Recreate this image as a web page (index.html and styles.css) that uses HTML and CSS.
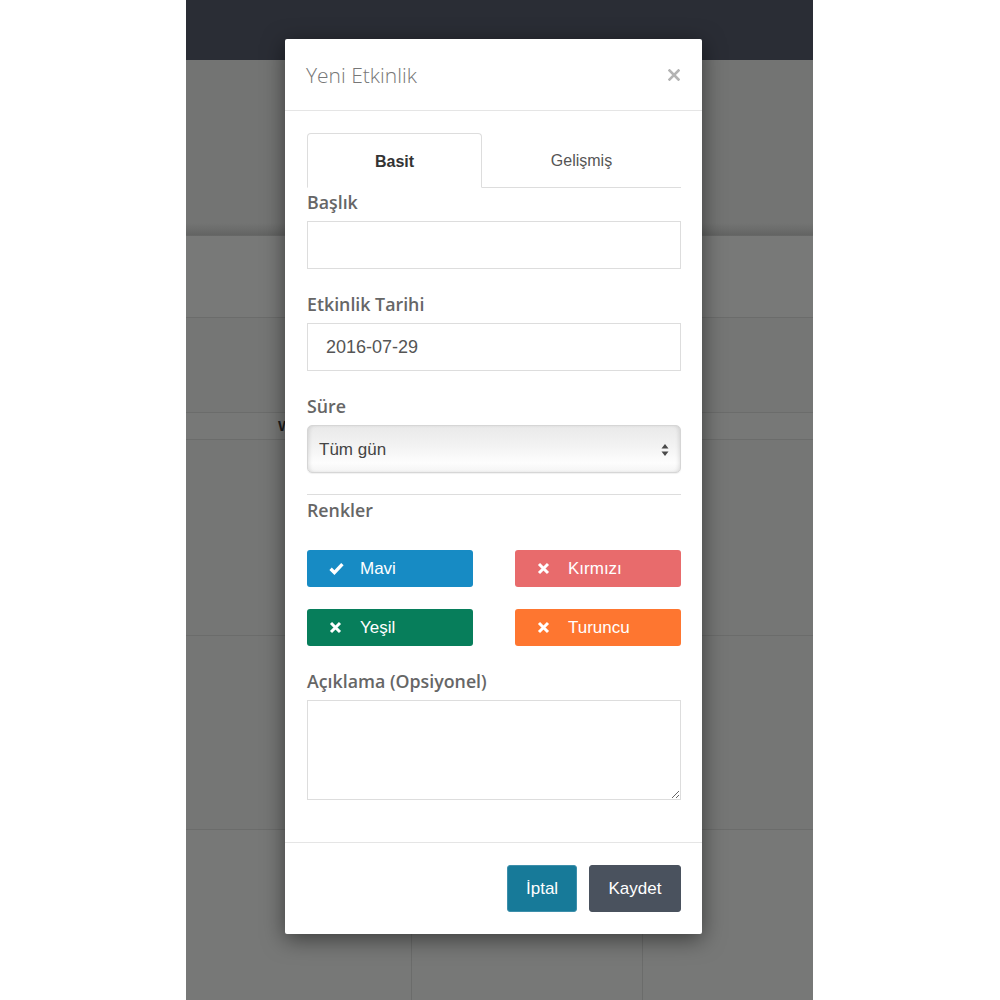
FILE: index.html
```html
<!DOCTYPE html>
<html lang="tr">
<head>
<meta charset="utf-8">
<title>Yeni Etkinlik</title>
<link rel="stylesheet" href="styles.css">
</head>
<body>
<div class="app">
  <div class="topbar"></div>
  <div class="hero"></div>
  <div class="row row-a"></div>
  <div class="row row-b"></div>
  <div class="row row-head"><span class="day">Wed</span></div>
  <div class="row row-c"></div>
  <div class="row row-d"></div>
  <div class="row row-e">
    <div class="cell"></div>
    <div class="cell"></div>
    <div class="cell"></div>
  </div>
</div>

<div class="modal">
  <div class="modal-header">
    <h4 class="modal-title">Yeni Etkinlik</h4>
    <span class="close" aria-label="Kapat">
      <svg width="12" height="12" viewBox="0 0 12 12"><path d="M1.5 1.5 L10.5 10.5 M10.5 1.5 L1.5 10.5" stroke="#b3b3b3" stroke-width="2.6" stroke-linecap="square"/></svg>
    </span>
  </div>
  <div class="modal-body">
    <div class="tabs">
      <div class="tab active">Basit</div>
      <div class="tab">Gelişmiş</div>
    </div>
    <div class="group">
      <label class="label">Başlık</label>
      <input class="input" type="text" value="">
    </div>
    <div class="group">
      <label class="label">Etkinlik Tarihi</label>
      <input class="input" type="text" value="2016-07-29">
    </div>
    <div class="group group-select">
      <label class="label">Süre</label>
      <div class="select">
        <span>Tüm gün</span>
        <svg width="8" height="14" viewBox="0 0 8 14"><path d="M4 1 L7.5 5.5 H0.5 Z M4 13 L7.5 8.5 H0.5 Z" fill="#4a4a4a"/></svg>
      </div>
    </div>
    <hr class="divider">
    <label class="label">Renkler</label>
    <div class="colors">
      <div class="color c-blue"><span class="ico"><svg width="15" height="13" viewBox="0 0 15 13"><path d="M1.6 6.8 L5.4 10.6 L13.4 2.2" stroke="#fff" stroke-width="3.4" fill="none"/></svg></span>Mavi</div>
      <div class="color c-red"><span class="ico"><svg width="13" height="13" viewBox="0 0 13 13"><path d="M2 2 L11 11 M11 2 L2 11" stroke="#fff" stroke-width="3"/></svg></span>Kırmızı</div>
      <div class="color c-green"><span class="ico"><svg width="13" height="13" viewBox="0 0 13 13"><path d="M2 2 L11 11 M11 2 L2 11" stroke="#fff" stroke-width="3"/></svg></span>Yeşil</div>
      <div class="color c-orange"><span class="ico"><svg width="13" height="13" viewBox="0 0 13 13"><path d="M2 2 L11 11 M11 2 L2 11" stroke="#fff" stroke-width="3"/></svg></span>Turuncu</div>
    </div>
    <div class="group group-last">
      <label class="label">Açıklama (Opsiyonel)</label>
      <textarea class="textarea"></textarea>
    </div>
  </div>
  <div class="modal-footer">
    <button class="btn btn-cancel">İptal</button>
    <button class="btn btn-save">Kaydet</button>
  </div>
</div>
</body>
</html>
```

FILE: styles.css
```css
* { box-sizing: border-box; }
html, body { margin: 0; padding: 0; background: #fff; }
body { font-family: "Liberation Sans", Arial, sans-serif; }

.app {
  width: 627px;
  height: 1000px;
  margin-left: 186px;
  background: #787978;
  overflow: hidden;
}
.topbar { height: 60px; background: #2a2d35; }
.hero {
  height: 176px;
  background: linear-gradient(to bottom, #737473 0, #737473 163px, #6d6e6d 168px, #636463 175px, #6a6b6a 176px);
}
.row { border-bottom: 1px solid #6b6c6b; }
.row-a { height: 82px; background: #787978; }
.row-b { height: 95px; background: #757675; }
.row-head { height: 27px; background: #777877; line-height: 26px; }
.day { padding-left: 92px; font-weight: bold; font-size: 15px; color: #1d1d1d; }
.row-c { height: 196px; background: #757675; }
.row-d { height: 194px; background: #757675; }
.row-e {
  height: 170px;
  display: grid;
  grid-template-columns: 226px 231px 1fr;
  border-bottom: none;
  background: #777877;
}
.cell { border-right: 1px solid #6b6c6b; }
.cell:last-child { border-right: none; }

.modal {
  position: absolute;
  left: 285px;
  top: 39px;
  width: 417px;
  background: #fff;
  border-radius: 2px;
  box-shadow: 0 5px 22px rgba(0,0,0,0.5);
}
.modal-header {
  height: 72px;
  border-bottom: 1px solid #e5e5e5;
  display: flex;
  align-items: center;
  justify-content: space-between;
  padding: 0 22px 0 21px;
}
.modal-title {
  margin: 0;
  font-family: "Open Sans", sans-serif;
  font-weight: 300;
  font-size: 21px;
  color: #777;
}
.close { display: flex; }

.modal-body { padding: 22px 21px 42px 22px; }

.tabs {
  display: grid;
  grid-template-columns: 175px 1fr;
  height: 55px;
  margin-bottom: 3px;
}
.tab {
  display: flex;
  align-items: center;
  justify-content: center;
  font-size: 16px;
  color: #555;
  border-bottom: 1px solid #ddd;
  padding-top: 2px;
}
.tab.active {
  font-weight: bold;
  color: #333;
  border: 1px solid #ddd;
  border-bottom: 1px solid transparent;
  border-radius: 4px 4px 0 0;
}

.group { margin-bottom: 24px; }
.group-select { margin-bottom: 21px; }
.group-last { margin-bottom: 0; }
.label {
  display: block;
  font-family: "Open Sans", sans-serif;
  font-weight: 600;
  font-size: 17.8px;
  line-height: 22px;
  color: #666;
  margin-bottom: 8px;
}
.input {
  display: block;
  width: 100%;
  height: 48px;
  border: 1px solid #ddd;
  padding: 0 18px;
  font-family: "Liberation Sans", Arial, sans-serif;
  font-size: 18px;
  color: #555;
  outline: none;
  margin: 0;
}
.select {
  height: 48px;
  border: 1px solid #d6d6d6;
  border-radius: 5px;
  background: linear-gradient(to bottom, #e9e9e9 0, #f3f3f3 45%, #fdfdfd 80%, #f4f4f4 100%);
  box-shadow: inset 3px 0 4px -2px rgba(0,0,0,0.12), inset -3px 0 4px -2px rgba(0,0,0,0.12), 0 1px 1px rgba(0,0,0,0.06);
  display: flex;
  align-items: center;
  justify-content: space-between;
  padding: 2px 11px 0 11px;
  font-size: 17px;
  color: #444;
}
.divider {
  border: 0;
  border-top: 1px solid #ddd;
  margin: 0 0 4px 0;
}
.colors {
  display: grid;
  grid-template-columns: 1fr 1fr;
  column-gap: 42px;
  row-gap: 22px;
  margin-top: 29px;
  margin-bottom: 24px;
}
.color {
  height: 37px;
  border-radius: 3px;
  display: flex;
  align-items: center;
  padding-left: 22px;
  color: #fff;
  font-size: 17px;
}
.ico { width: 16px; margin-right: 15px; display: flex; }
.c-blue { background: #178bc4; }
.c-red { background: #e86b6c; }
.c-green { background: #077e5b; }
.c-orange { background: #fe7630; }

.textarea {
  display: block;
  width: 100%;
  height: 100px;
  border: 1px solid #ddd;
  resize: both;
  margin: 0;
  font-family: "Liberation Sans", Arial, sans-serif;
}

.modal-footer {
  border-top: 1px solid #e5e5e5;
  padding: 22px 21px 22px 21px;
  display: flex;
  justify-content: flex-end;
  gap: 12px;
}
.btn {
  height: 47px;
  border-radius: 3px;
  padding: 0 18px;
  font-family: "Liberation Sans", Arial, sans-serif;
  font-size: 17px;
  color: #fff;
  border: 1px solid transparent;
}
.btn-cancel { background: #177a99; border-color: #3d8fab; width: 70px; }
.btn-save { background: #4a525e; border-color: #4a525e; width: 92px; }
```
